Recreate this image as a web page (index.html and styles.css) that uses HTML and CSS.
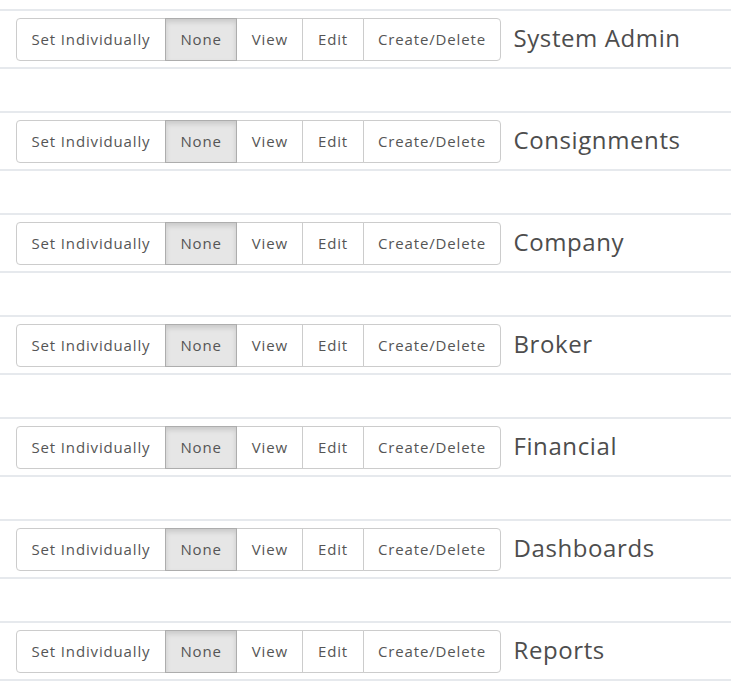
FILE: index.html
```html
<!DOCTYPE html>
<html lang="en">

<head>
    <meta charset="UTF-8">
    <meta name="viewport" content="width=device-width, initial-scale=1.0">
    <title>Permissions</title>
    <link rel="stylesheet" href="styles.css">
</head>

<body>
    <div class="permissions">
        <!-- one row per module -->
        <div class="perm-row">
            <div class="btn-group">
                <button class="btn">Set Individually</button>
                <button class="btn active">None</button>
                <button class="btn">View</button>
                <button class="btn">Edit</button>
                <button class="btn">Create/Delete</button>
            </div>
            <span class="perm-name">System Admin</span>
        </div>

        <div class="perm-row">
            <div class="btn-group">
                <button class="btn">Set Individually</button>
                <button class="btn active">None</button>
                <button class="btn">View</button>
                <button class="btn">Edit</button>
                <button class="btn">Create/Delete</button>
            </div>
            <span class="perm-name">Consignments</span>
        </div>

        <div class="perm-row">
            <div class="btn-group">
                <button class="btn">Set Individually</button>
                <button class="btn active">None</button>
                <button class="btn">View</button>
                <button class="btn">Edit</button>
                <button class="btn">Create/Delete</button>
            </div>
            <span class="perm-name">Company</span>
        </div>

        <div class="perm-row">
            <div class="btn-group">
                <button class="btn">Set Individually</button>
                <button class="btn active">None</button>
                <button class="btn">View</button>
                <button class="btn">Edit</button>
                <button class="btn">Create/Delete</button>
            </div>
            <span class="perm-name">Broker</span>
        </div>

        <div class="perm-row">
            <div class="btn-group">
                <button class="btn">Set Individually</button>
                <button class="btn active">None</button>
                <button class="btn">View</button>
                <button class="btn">Edit</button>
                <button class="btn">Create/Delete</button>
            </div>
            <span class="perm-name">Financial</span>
        </div>

        <div class="perm-row">
            <div class="btn-group">
                <button class="btn">Set Individually</button>
                <button class="btn active">None</button>
                <button class="btn">View</button>
                <button class="btn">Edit</button>
                <button class="btn">Create/Delete</button>
            </div>
            <span class="perm-name">Dashboards</span>
        </div>

        <div class="perm-row">
            <div class="btn-group">
                <button class="btn">Set Individually</button>
                <button class="btn active">None</button>
                <button class="btn">View</button>
                <button class="btn">Edit</button>
                <button class="btn">Create/Delete</button>
            </div>
            <span class="perm-name">Reports</span>
        </div>
    </div>
</body>

</html>
```

FILE: styles.css
```css
/* Global styles */
body {
    font-family: 'Open Sans', 'Liberation Sans', sans-serif;
    background-color: #ffffff;
    color: #555;
    margin: 0;
    padding: 9px 0 0 0;
}

.permissions {
    display: flex;
    flex-direction: column;
    gap: 42px;
}

.perm-row {
    display: flex;
    align-items: center;
    gap: 12px;
    height: 56px;
    padding-left: 16px;
    border-top: 2px solid #e6e9ed;
    border-bottom: 2px solid #e6e9ed;
}

.btn-group {
    display: flex;
    height: 43px;
    border-radius: 4px;
}

.btn {
    font-family: inherit;
    font-size: 15px;
    letter-spacing: 0.85px;
    color: #555;
    background-color: #fff;
    border: 1px solid #ccc;
    margin-left: -1px;
    padding: 0 14.5px;
    cursor: pointer;
}

.btn:first-child {
    margin-left: 0;
    border-radius: 4px 0 0 4px;
}

.btn:last-child {
    border-radius: 0 4px 4px 0;
}

.btn.active {
    background-color: #e6e6e6;
    border-color: #adadad;
    box-shadow: inset 0 3px 5px rgba(0, 0, 0, 0.125);
    position: relative;
}

.perm-name {
    font-size: 24px;
    letter-spacing: 0.6px;
    color: #4d4d4d;
    padding-bottom: 3px;
}
```
